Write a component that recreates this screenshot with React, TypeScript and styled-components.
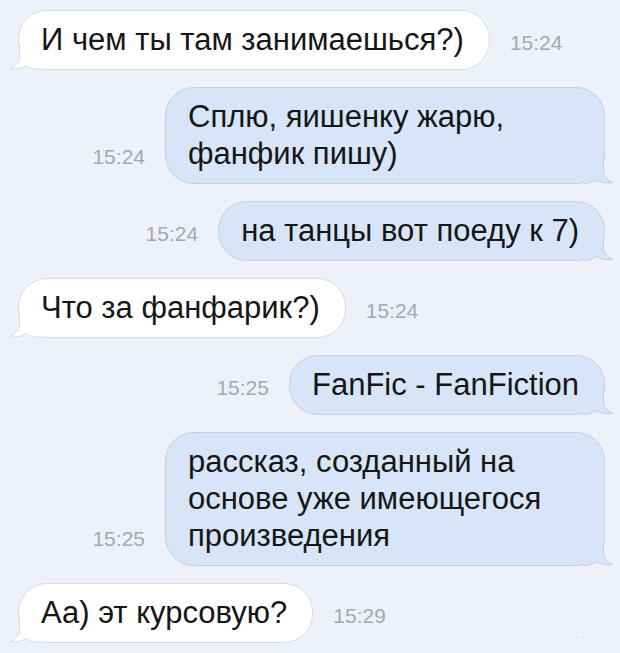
import styled, { createGlobalStyle } from 'styled-components'

const GlobalStyle = createGlobalStyle`
    html, body {
        margin: 0;
        padding: 0;
        background: #eef2f8;
    }
    body {
        font-family: "Liberation Sans", Arial, sans-serif;
    }
`

type Message = {
    text: string
    time: string
    out: boolean
}

const messages: Message[] = [
    { text: 'И чем ты там занимаешься?)', time: '15:24', out: false },
    { text: 'Сплю, яишенку жарю, фанфик пишу)', time: '15:24', out: true },
    { text: 'на танцы вот поеду к 7)', time: '15:24', out: true },
    { text: 'Что за фанфарик?)', time: '15:24', out: false },
    { text: 'FanFic - FanFiction', time: '15:25', out: true },
    { text: 'рассказ, созданный на основе уже имеющегося произведения', time: '15:25', out: true },
    { text: 'Аа) эт курсовую?', time: '15:29', out: false },
]

// Styles
const Chat = styled.div`
    position: relative;
    width: 620px;
    height: 653px;
    box-sizing: border-box;
    padding: 10px 15px 0 18px;
    display: flex;
    flex-direction: column;
    gap: 17px;
    overflow: hidden;
`

const Row = styled.div<{ $out: boolean }>`
    display: flex;
    flex-direction: ${p => (p.$out ? 'row-reverse' : 'row')};
    align-items: flex-end;
    gap: 20px;
`

const Bubble = styled.div<{ $out: boolean }>`
    position: relative;
    max-width: ${p => (p.$out ? '440px' : '480px')};
    box-sizing: border-box;
    padding: 10px 25px 11px 22px;
    border-radius: 29px;
    border: 1px solid ${p => (p.$out ? '#c3d0e2' : '#d6dce5')};
    background: ${p => (p.$out ? '#d8e5f8' : '#ffffff')};
    color: #161616;
    font-size: 31px;
    line-height: 37px;
`

const Tail = styled.svg<{ $out: boolean }>`
    position: absolute;
    bottom: -1px;
    ${p => (p.$out ? 'right: -10px; transform: scaleX(-1);' : 'left: -10px;')}
    width: 30px;
    height: 26px;
    overflow: visible;
`

const Time = styled.span`
    flex-shrink: 0;
    margin-bottom: 17px;
    font-size: 21px;
    line-height: 20px;
    color: #a5a8ae;
    white-space: nowrap;
`

const Dots = styled.span`
    position: absolute;
    right: 24px;
    bottom: 10px;
    font-size: 10px;
    letter-spacing: 4px;
    color: #b9bec6;
`

function BubbleTail({ out }: { out: boolean }) {
    const fill = out ? '#d8e5f8' : '#ffffff'
    const stroke = out ? '#c3d0e2' : '#d6dce5'
    return (
        <Tail $out={out} viewBox='0 0 30 26'>
            <path
                d='M10.5 0 L10.5 13 C10.5 18 7 22 1 24.5 C7 25.5 13 24.5 17 21.5 C20 23.5 25 25.5 30 25.5 L30 0 Z'
                fill={fill}
            />
            <path
                d='M10.5 0 L10.5 13 C10.5 18 7 22 1 24.5 C7 25.5 13 24.5 17 21.5 C20 23.5 25 25.5 30 25.5'
                fill='none'
                stroke={stroke}
                strokeWidth='1'
            />
        </Tail>
    )
}

function App() {
    return (
        <>
            <GlobalStyle />
            <Chat>
                {messages.map((m, i) => (
                    <Row key={i} $out={m.out}>
                        <Bubble $out={m.out}>
                            {m.text}
                            <BubbleTail out={m.out} />
                        </Bubble>
                        <Time>{m.time}</Time>
                    </Row>
                ))}
                <Dots>···</Dots>
            </Chat>
        </>
    )
}

export default App
